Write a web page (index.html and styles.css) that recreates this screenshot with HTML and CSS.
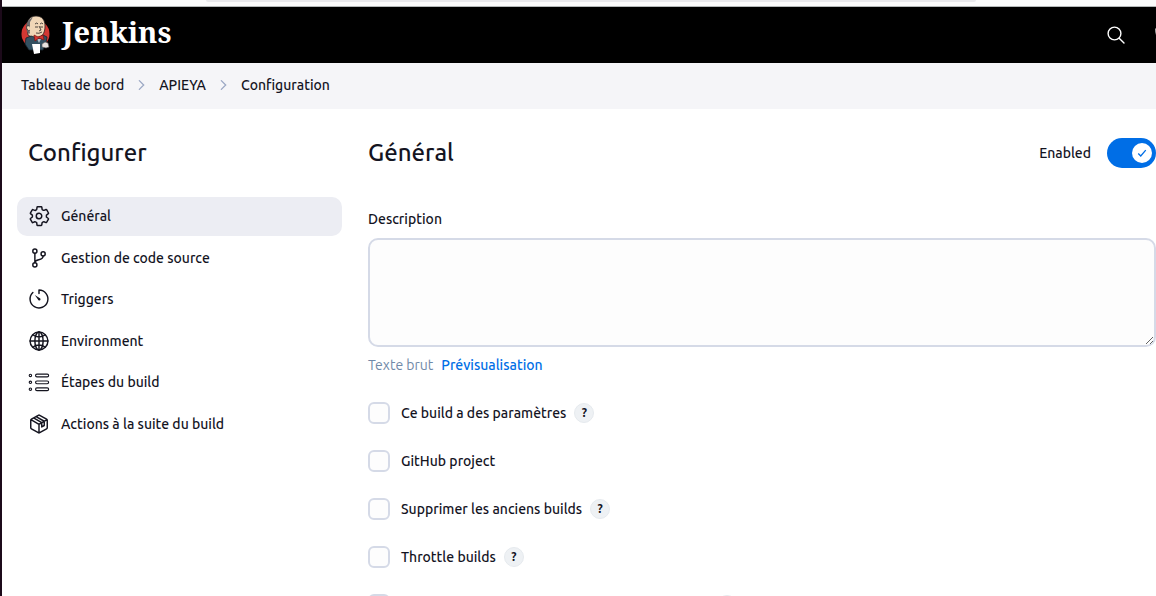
FILE: index.html
```html
<!DOCTYPE html>
<html lang="fr">
<head>
<meta charset="utf-8">
<title>APIEYA Config [Jenkins]</title>
<meta name="viewport" content="width=device-width, initial-scale=1">
<link rel="stylesheet" href="styles.css">
</head>
<body>
<div class="browser-edge"><div class="address-bar"></div></div>
<header class="header">
  <a class="brand" href="#">
    <svg class="brand-logo" viewBox="0 0 30 40" aria-hidden="true">
      <circle cx="14.500" cy="19" r="14" fill="#d33833"/>
      <path d="M7 20 6 12C6 5 9 1 15 1s9 4 9 10c0 6-2 10-6 11l-6 1z" fill="#f0d6b7" stroke="#231f20" stroke-width=".8"/>
      <path d="M7 18C4 14 5 7 9 4l3-2-3 5 0 4-1 2 1 5-1 1z" fill="#6d6b6d"/>
      <path d="M8 11c-2-1-3 1-2 3s2 2 3 1" fill="#f0d6b7" stroke="#231f20" stroke-width=".7"/>
      <path d="M14 9q2-2 3 0M19 9q2-2 3 0M14 12h3M19 12h3M18 11l2 4-2 1M15 18q3 1 6-1" fill="none" stroke="#231f20" stroke-width=".8"/>
      <path d="M10 21 5 23 4 29 8 35h14l3-7 1-6-4-2-5 3z" fill="#335061" stroke="#16232b" stroke-width=".8"/>
      <path d="M16 24l2 4 2-4z" fill="#aebfca"/>
      <path d="M13 20l4 2 5-2 1 5-5-2-4 3z" fill="#d33833" stroke="#81100f" stroke-width=".7"/>
      <path d="M11 29h8v9l-6 1z" fill="#fff"/>
      <path d="M21 29l3-2 3 1 1 4-3 1-4-1z" fill="#e8e4e0" stroke="#555" stroke-width=".6"/>
    </svg>
    <span class="brand-name">Jenkins</span>
  </a>
  <div class="header-actions">
    <button class="icon-button" type="button" aria-label="Rechercher">
      <svg viewBox="0 0 20 20" aria-hidden="true"><circle cx="8.500" cy="8.500" r="6.400"/><path d="M13.200 13.200l4.800 4.800"/></svg>
    </button>
    <button class="icon-button" type="button" aria-label="Notifications">
      <svg viewBox="0 0 20 20" aria-hidden="true"><path d="M1 4c0 6 1 9 4 11h10c3-2 4-5 4-11"/></svg>
    </button>
  </div>
</header>
<nav class="breadcrumbs" aria-label="Fil d’Ariane">
  <a href="#">Tableau de bord</a>
  <svg class="chevron" viewBox="0 0 8 12" aria-hidden="true"><path d="M1.500 1l5 5-5 5"/></svg>
  <a href="#">APIEYA</a>
  <svg class="chevron" viewBox="0 0 8 12" aria-hidden="true"><path d="M1.500 1l5 5-5 5"/></svg>
  <a href="#">Configuration</a>
</nav>
<div class="page">
  <aside class="sidebar">
    <h1 class="title">Configurer</h1>
    <nav class="tasks">
      <a class="task task-active" href="#">
        <svg viewBox="0 0 512 512" aria-hidden="true"><path d="M262 192a64 64 0 1 0 58 70 64 64 0 0 0-58-70zm167 64a165 165 0 0 1-2 22l46 37a11 11 0 0 1 3 14l-44 76a11 11 0 0 1-13 4l-46-18a17 17 0 0 0-17 1 179 179 0 0 1-20 12 17 17 0 0 0-9 13l-7 49a11 11 0 0 1-11 10h-88a11 11 0 0 1-11-9l-7-49a17 17 0 0 0-9-14 159 159 0 0 1-20-11 17 17 0 0 0-16-2l-46 19a11 11 0 0 1-14-5l-44-76a11 11 0 0 1 3-14l39-31a17 17 0 0 0 7-15 153 153 0 0 1 0-23 17 17 0 0 0-7-15l-39-31a11 11 0 0 1-2-13l43-76a11 11 0 0 1 14-5l46 19a17 17 0 0 0 16-2 179 179 0 0 1 21-12 17 17 0 0 0 9-13l7-49a11 11 0 0 1 11-10h88a11 11 0 0 1 11 9l7 49a17 17 0 0 0 9 14 159 159 0 0 1 20 11 17 17 0 0 0 16 2l46-19a11 11 0 0 1 14 5l44 76a11 11 0 0 1-3 14l-39 31a17 17 0 0 0-7 15c1 4 1 8 1 12z"/></svg>
        Général
      </a>
      <a class="task" href="#">
        <svg viewBox="0 0 512 512" aria-hidden="true"><circle cx="160" cy="96" r="48"/><circle cx="160" cy="416" r="48"/><circle cx="352" cy="160" r="48"/><path d="M160 368V144M352 208c0 128-192 48-192 160"/></svg>
        Gestion de code source
      </a>
      <a class="task" href="#">
        <svg viewBox="0 0 512 512" aria-hidden="true"><path d="M113 105a208 208 0 1 0 143-57v80"/><path d="M158 160l110 74a30 30 0 1 1-36 36z" fill="currentColor" stroke="none"/></svg>
        Triggers
      </a>
      <a class="task" href="#">
        <svg viewBox="0 0 512 512" aria-hidden="true"><circle cx="256" cy="256" r="208"/><ellipse cx="256" cy="256" rx="96" ry="208"/><path d="M256 48v416M48 256h416M117 117c38 28 87 44 139 44s101-16 139-44M117 395c38-28 87-44 139-44s101 16 139 44"/></svg>
        Environment
      </a>
      <a class="task" href="#">
        <svg class="thin" viewBox="0 0 512 512" aria-hidden="true"><rect x="176" y="72" width="304" height="64" rx="32"/><rect x="176" y="232" width="304" height="64" rx="32"/><rect x="176" y="392" width="304" height="64" rx="32"/><circle cx="56" cy="104" r="28"/><circle cx="56" cy="264" r="28"/><circle cx="56" cy="424" r="28"/></svg>
        Étapes du build
      </a>
      <a class="task" href="#">
        <svg viewBox="0 0 512 512" aria-hidden="true"><path d="M448 341V171a32 32 0 0 0-16-28L272 53a32 32 0 0 0-32 0L80 143a32 32 0 0 0-16 28v170a32 32 0 0 0 16 28l160 90a32 32 0 0 0 32 0l160-90a32 32 0 0 0 16-28zM69 153l187 110 187-110M256 463V263M130 116l190 109v100l58-34v-99L188 84"/></svg>
        Actions à la suite du build
      </a>
    </nav>
  </aside>
  <main class="content">
    <div class="section-head">
      <h2 class="title">Général</h2>
      <label class="enable">Enabled
        <span class="toggle">
          <input type="checkbox" role="switch" checked>
          <span class="toggle-knob"><svg viewBox="0 0 12 12" aria-hidden="true"><path d="M1.500 6.500l3 3 6-7"/></svg></span>
        </span>
      </label>
    </div>
    <label class="field-label" for="description">Description</label>
    <textarea class="description" id="description"></textarea>
    <div class="preview-links"><span class="muted">Texte brut</span><a href="#">Prévisualisation</a></div>
    <div class="options">
      <div class="option"><label><input type="checkbox">Ce build a des paramètres</label><button class="help" type="button" aria-label="Aide">?</button></div>
      <div class="option"><label><input type="checkbox">GitHub project</label></div>
      <div class="option"><label><input type="checkbox">Supprimer les anciens builds</label><button class="help" type="button" aria-label="Aide">?</button></div>
      <div class="option"><label><input type="checkbox">Throttle builds</label><button class="help" type="button" aria-label="Aide">?</button></div>
      <div class="option"><label><input type="checkbox">Exécuter des builds simultanément si nécessaire</label><button class="help" type="button" aria-label="Aide">?</button></div>
    </div>
  </main>
</div>
</body>
</html>
```
FILE: styles.css
```css
* { box-sizing: border-box; }

body {
  margin: 0;
  height: 100vh;
  overflow: hidden;
  border-left: 2px solid #1c0a1a;
  background: #fff;
  color: #14141f;
  font: 500 14px/20px Ubuntu, "Noto Sans", sans-serif;
}

a { color: inherit; text-decoration: none; }
button { font: inherit; }

.browser-edge {
  height: 7px;
  padding: 0 180px 0 204px;
  background: #fbfbfb;
  border-bottom: 1px solid #b4b8b8;
}
.address-bar { height: 2px; background: #e9e9ec; border-radius: 0 0 4px 4px; }

.header {
  display: flex;
  align-items: center;
  justify-content: space-between;
  height: 56px;
  padding-left: 19px;
  overflow: hidden;
  background: #000;
  color: #fff;
}
.brand { display: flex; align-items: center; gap: 11px; }
.brand-logo { width: 30px; height: 40px; }
.brand-name {
  padding-bottom: 6px;
  font: bold 29px/40px "Noto Serif", "DejaVu Serif Condensed", "DejaVu Serif", serif;
}
.header-actions { display: flex; gap: 29px; margin-right: -19px; }
.icon-button {
  width: 20px;
  height: 20px;
  padding: 0;
  border: 0;
  background: none;
  color: #fff;
}
.icon-button svg {
  display: block;
  width: 20px;
  height: 20px;
  fill: none;
  stroke: currentColor;
  stroke-width: 1.4;
  stroke-linecap: round;
}

.breadcrumbs {
  display: flex;
  align-items: center;
  gap: 14px;
  height: 46px;
  padding: 0 19px 2px;
  background: #f5f5f8;
}
.chevron {
  width: 7px;
  height: 12px;
  fill: none;
  stroke: #9ba8c4;
  stroke-width: 1.5;
  stroke-linecap: round;
}

.page {
  display: grid;
  grid-template-columns: 325px minmax(0, 1fr);
  gap: 26px;
  padding: 28px 0 0 15px;
}
.title { margin: 0; font-size: 24px; line-height: 32px; font-weight: 500; }
.sidebar .title { padding-left: 11px; }

.tasks {
  display: grid;
  align-content: space-between;
  min-height: 247px;
  margin-top: 28px;
}
.task {
  display: flex;
  align-items: center;
  gap: 11px;
  height: 39px;
  padding: 0 11px 1px;
  border-radius: 10px;
}
.task-active { background: #ecedf3; }
.task svg {
  width: 22px;
  height: 22px;
  fill: none;
  stroke: currentColor;
  stroke-width: 34;
  stroke-linecap: round;
  stroke-linejoin: round;
}
.task .thin { stroke-width: 26; }

.section-head { display: flex; align-items: center; justify-content: space-between; }
.enable { display: flex; align-items: center; gap: 16px; }
.toggle { display: grid; }
.toggle > * { grid-area: 1 / 1; }
.toggle input {
  appearance: none;
  width: 49px;
  height: 30px;
  margin: 0;
  border-radius: 15px;
  background: #99a;
}
.toggle input:checked { background: #006ee6; }
.toggle-knob {
  display: grid;
  place-items: center;
  place-self: center end;
  width: 20px;
  height: 20px;
  margin-right: 4px;
  border-radius: 50%;
  background: #fff;
  pointer-events: none;
}
.toggle-knob svg { width: 10px; height: 10px; fill: none; stroke: #006ee6; stroke-width: 1.6; }

.field-label { display: block; margin: 40px 0 9px; }
.description {
  display: block;
  width: 100%;
  height: 109px;
  border: 2px solid #d5dae7;
  border-radius: 10px;
  background: #fdfdfd;
  font: inherit;
  resize: vertical;
}
.preview-links { display: flex; gap: 8px; margin-top: 8px; }
.muted { color: #7089a8; font-weight: 400; }
.preview-links a { color: #006ee6; }

.options { display: grid; gap: 26px; margin-top: 27px; }
.option { display: flex; align-items: center; gap: 8px; height: 22px; }
.option label { display: flex; align-items: center; gap: 11px; white-space: nowrap; }
.option input {
  appearance: none;
  width: 22px;
  height: 22px;
  margin: 0;
  border: 2px solid #d5dae7;
  border-radius: 6px;
  background: #fdfdfd;
}
.help {
  width: 20px;
  height: 20px;
  padding: 0;
  border: 1px solid #e6eaee;
  border-radius: 50%;
  background: #eef1f4;
  color: #14141f;
  font-size: 12px;
  line-height: 18px;
  font-weight: 600;
}
```
